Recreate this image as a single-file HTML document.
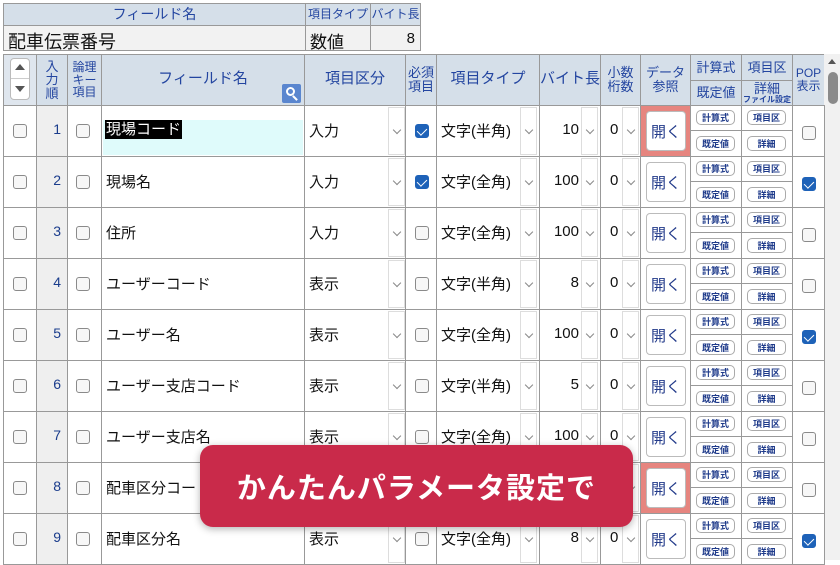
<!DOCTYPE html>
<html><head><meta charset="utf-8">
<style>
*{box-sizing:border-box;margin:0;padding:0}
body{width:840px;height:560px;overflow:hidden;background:#fff;position:relative;font-family:"Liberation Sans","Noto Sans CJK JP",sans-serif;}
.a{position:absolute}
.hd{background:#d5dfe9;color:#2345a0;border:1px solid #999;display:flex;align-items:center;justify-content:center;text-align:center;line-height:1.05}
.c{border:1px solid #999;position:absolute}
.cb{position:absolute;width:14px;height:14px;border:1px solid #8a8a8a;border-radius:3px;background:#f7f7f7}
.cb.on{background:#1e62b8;border-color:#1e62b8}
.cb.on:after{content:"";position:absolute;left:3px;top:1px;width:5px;height:8px;border:solid #fff;border-width:0 1.5px 1.5px 0;transform:rotate(45deg)}
.t{position:absolute;font-size:15px;color:#111;white-space:nowrap}
.arr{position:absolute;width:17px;border:1px solid #ddd;background:#fff}
.arr:after{content:"";position:absolute;left:5px;top:50%;width:5px;height:5px;border:solid #888;border-width:0 1px 1px 0;transform:translateY(-4px) rotate(45deg)}
.btn{position:absolute;border:1px solid #bbb;border-radius:4px;background:#fff;display:flex;align-items:center;justify-content:center;font-size:15px;color:#223a8a}
.sb{position:absolute;border:1px solid #aaa;border-radius:5px;background:#fff;font-size:9px;font-weight:bold;color:#1e3a8a;display:flex;align-items:center;justify-content:center}
</style></head><body>
<!-- top summary -->
<div class="a hd" style="left:3px;top:3px;width:303px;height:23px;font-size:14px">フィールド名</div>
<div class="a hd" style="left:305px;top:3px;width:66px;height:23px;font-size:12px">項目タイプ</div>
<div class="a hd" style="left:370px;top:3px;width:51px;height:23px;font-size:12px">バイト長</div>
<div class="a" style="left:3px;top:25px;width:303px;height:26px;border:1px solid #999;background:#f2f2f2;font-size:18px;padding:2px 4px;color:#111">配車伝票番号</div>
<div class="a" style="left:305px;top:25px;width:66px;height:26px;border:1px solid #999;background:#f2f2f2;font-size:17px;padding:2px 4px;color:#111">数値</div>
<div class="a" style="left:370px;top:25px;width:51px;height:26px;border:1px solid #999;background:#f2f2f2;font-size:15px;padding:4px 5px;text-align:right;color:#111">8</div>

<!-- header -->
<div class="a hd" style="left:3px;top:54px;width:34px;height:52px;background:#dfe6ee"></div>
<div class="a" style="left:10px;top:58px;width:20px;height:42px;border:1px solid #bbb;border-radius:4px;background:#fff"></div>
<div class="a" style="left:11px;top:78px;width:18px;height:1px;background:#ccc"></div>
<div class="a" style="left:15px;top:64px;border:5px solid transparent;border-bottom:6px solid #555;border-top:0"></div>
<div class="a" style="left:15px;top:86px;border:5px solid transparent;border-top:6px solid #555;border-bottom:0"></div>
<div class="a hd" style="left:36px;top:54px;width:32px;height:52px;font-size:13px">入<br>力<br>順</div>
<div class="a hd" style="left:67px;top:54px;width:35px;height:52px;font-size:12px">論理<br>キー<br>項目</div>
<div class="a hd" style="left:101px;top:54px;width:204px;height:52px;font-size:15px;padding-bottom:2px">フィールド名</div>
<div class="a" style="left:282px;top:84px;width:19px;height:19px;background:#5a86cf;border-radius:2px"><div class="a" style="left:4px;top:3px;width:9px;height:9px;border:2px solid #fff;border-radius:50%"></div><div class="a" style="left:12px;top:11px;width:2px;height:6px;background:#fff;transform:rotate(-45deg)"></div></div>
<div class="a hd" style="left:304px;top:54px;width:102px;height:52px;font-size:15px;padding-bottom:2px">項目区分</div>
<div class="a hd" style="left:405px;top:54px;width:32px;height:52px;font-size:13px">必須<br>項目</div>
<div class="a hd" style="left:436px;top:54px;width:104px;height:52px;font-size:15px;padding-bottom:2px">項目タイプ</div>
<div class="a hd" style="left:539px;top:54px;width:62px;height:52px;font-size:15px;padding-bottom:2px">バイト長</div>
<div class="a hd" style="left:600px;top:54px;width:41px;height:52px;font-size:13px">小数<br>桁数</div>
<div class="a hd" style="left:640px;top:54px;width:51px;height:52px;font-size:13px">データ<br>参照</div>
<div class="a hd" style="left:690px;top:54px;width:52px;height:27px;font-size:13px">計算式</div>
<div class="a hd" style="left:741px;top:54px;width:52px;height:27px;font-size:13px">項目区</div>
<div class="a hd" style="left:690px;top:80px;width:52px;height:26px;font-size:13px">既定値</div>
<div class="a hd" style="left:741px;top:80px;width:52px;height:26px;font-size:13px;flex-direction:column">詳細<span style="font-size:8px;font-weight:bold">ファイル設定</span></div>
<div class="a hd" style="left:792px;top:54px;width:33px;height:52px;font-size:12px">POP<br>表示</div>

<!-- scrollbar -->
<div class="a" style="left:824px;top:54px;width:16px;height:506px;background:#f1f1f1"></div>
<div class="a" style="left:828px;top:59px;border:4px solid transparent;border-bottom:5px solid #555;border-top:0"></div>
<div class="a" style="left:828px;top:72px;width:10px;height:32px;background:#8a8a8a;border-radius:5px"></div>

<div id="rows"></div>

<!-- banner -->
<div class="a" style="left:200px;top:445px;width:433px;height:82px;background:#c92a4a;border-radius:13px;box-shadow:0 2px 8px rgba(0,0,0,.3);color:#fff;font-weight:bold;font-size:29px;display:flex;align-items:center;justify-content:center;letter-spacing:1px">かんたんパラメータ設定で</div>

<script>
var d=[["現場コード","入力",1,"半角","10",0],["現場名","入力",1,"全角","100",1],["住所","入力",0,"全角","100",0],["ユーザーコード","表示",0,"半角","8",0],["ユーザー名","表示",0,"全角","100",1],["ユーザー支店コード","表示",0,"半角","5",0],["ユーザー支店名","表示",0,"全角","100",0],["配車区分コード","表示",0,"半角","8",0],["配車区分名","表示",0,"全角","8",1]];
var h="",X=[3,36,67,101,304,405,436,539,600,640,690,741,792,824];
d.forEach(function(r,i){
var y=105+i*51,H=52;
for(var k=0;k<13;k++){
var bg=k==1?"#efefef":"#fff";
if(k==10||k==11){h+='<div class="c" style="left:'+X[k]+'px;top:'+y+'px;width:'+(X[k+1]-X[k]+1)+'px;height:26px;background:#fff"></div><div class="c" style="left:'+X[k]+'px;top:'+(y+25)+'px;width:'+(X[k+1]-X[k]+1)+'px;height:27px;background:#fff"></div>';continue;}
if(k==9&&(i==0||i==7))bg="#e6857f";
h+='<div class="c" style="left:'+X[k]+'px;top:'+y+'px;width:'+(X[k+1]-X[k]+1)+'px;height:'+H+'px;background:'+bg+'"></div>';}
var cy=y+19;
h+='<div class="cb" style="left:13px;top:'+cy+'px"></div>';
h+='<div class="t" style="left:36px;width:25px;text-align:right;top:'+(y+16)+'px;font-size:14px;color:#1a3c8c">'+(i+1)+'</div>';
h+='<div class="cb" style="left:76px;top:'+cy+'px"></div>';
if(i==0)h+='<div class="a" style="left:103px;top:'+(y+15)+'px;width:200px;height:35px;background:#dffbfb"></div><div class="t" style="left:105px;top:'+(y+15)+'px;background:#000;color:#fff;padding:0 1px;line-height:19px">'+r[0]+'</div>';
else h+='<div class="t" style="left:106px;top:'+(y+15)+'px">'+r[0]+'</div>';
h+='<div class="t" style="left:309px;top:'+(y+15)+'px">'+r[1]+'</div><div class="arr" style="left:388px;top:'+(y+2)+'px;height:48px"></div>';
h+='<div class="cb'+(r[2]?' on':'')+'" style="left:415px;top:'+cy+'px"></div>';
h+='<div class="t" style="left:441px;top:'+(y+15)+'px">文字('+r[3]+')</div><div class="arr" style="left:520px;top:'+(y+2)+'px;height:48px"></div>';
h+='<div class="t" style="left:540px;width:39px;text-align:right;top:'+(y+16)+'px">'+r[4]+'</div><div class="arr" style="left:581px;top:'+(y+2)+'px;height:48px"></div>';
h+='<div class="t" style="left:610px;top:'+(y+16)+'px">0</div><div class="arr" style="left:622px;top:'+(y+2)+'px;height:48px"></div>';
h+='<div class="btn" style="left:646px;top:'+(y+6)+'px;width:40px;height:40px">開く</div>';
h+='<div class="sb" style="left:696px;top:'+(y+5)+'px;width:39px;height:15px">計算式</div><div class="sb" style="left:747px;top:'+(y+5)+'px;width:39px;height:15px">項目区</div>';
h+='<div class="sb" style="left:696px;top:'+(y+31)+'px;width:39px;height:15px">既定値</div><div class="sb" style="left:747px;top:'+(y+31)+'px;width:39px;height:15px">詳細</div>';
h+='<div class="cb'+(r[5]?' on':'')+'" style="left:802px;top:'+(y+21)+'px"></div>';
});
document.getElementById("rows").innerHTML=h;
</script>
</body></html>
